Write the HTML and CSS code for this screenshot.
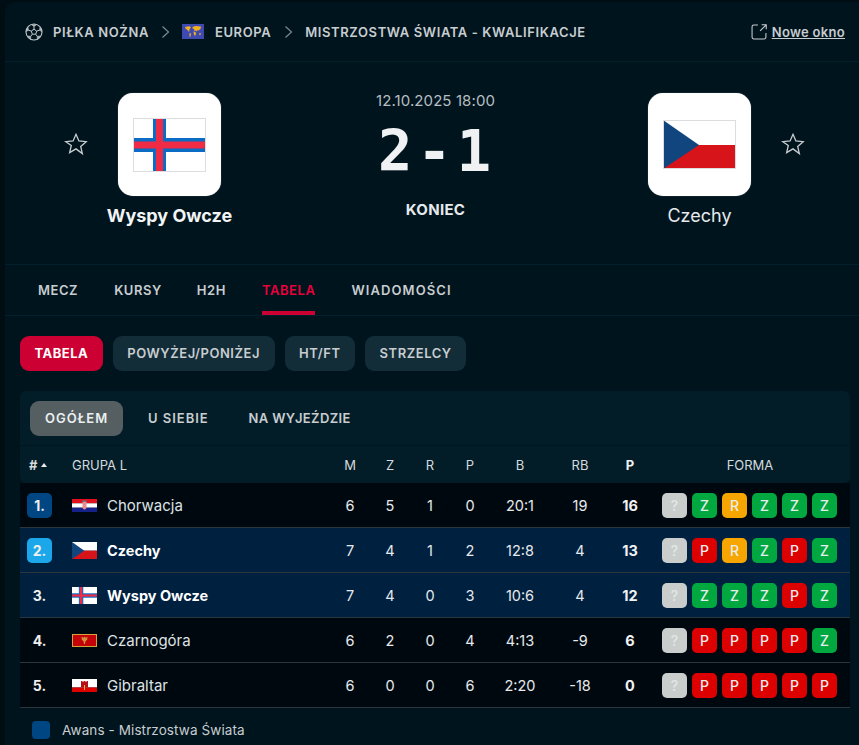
FILE: index.html
```html
<!DOCTYPE html>
<html lang="pl">
<head>
<meta charset="utf-8">
<title>Wyspy Owcze - Czechy</title>
<link rel="stylesheet" href="styles.css">
</head>
<body>
<svg class="defs" width="0" height="0">
  <defs>
    <symbol id="flag-fo" viewBox="0 0 73 54" preserveAspectRatio="none">
      <rect width="73" height="54" fill="#fff"/>
      <rect x="20" width="13" height="54" fill="#0a6cc4"/>
      <rect y="20" width="73" height="14" fill="#0a6cc4"/>
      <rect x="23" width="7" height="54" fill="#ef2b45"/>
      <rect y="23.500" width="73" height="7" fill="#ef2b45"/>
    </symbol>
    <symbol id="flag-cz" viewBox="0 0 73 49" preserveAspectRatio="none">
      <rect width="73" height="25" fill="#fff"/>
      <rect y="25" width="73" height="24" fill="#d7141a"/>
      <path d="M0 0 L36 25 L0 49Z" fill="#11457e"/>
    </symbol>
    <symbol id="flag-hr" viewBox="0 0 25 13" preserveAspectRatio="none">
      <rect width="25" height="4.300" fill="#e2101c"/>
      <rect y="4.300" width="25" height="4.400" fill="#fff"/>
      <rect y="8.700" width="25" height="4.300" fill="#16228a"/>
      <path d="M10.500 3h4v5.500q0 1.500-2 2-2-.5-2-2z" fill="#e58e8e"/>
      <rect x="10.500" y="1.500" width="4" height="1.500" fill="#6a7a98"/>
    </symbol>
    <symbol id="flag-me" viewBox="0 0 25 13" preserveAspectRatio="none">
      <rect width="25" height="13" fill="#d4a33a"/>
      <rect x="1" y="1" width="23" height="11" fill="#c40308"/>
      <path d="M12.500 2.500l1 1.200 2-1-.3 3-1.700 1.600-.5 2.700h-1l-.5-2.700-1.700-1.600-.3-3 2 1z" fill="#d3913a"/>
    </symbol>
    <symbol id="flag-gi" viewBox="0 0 25 13" preserveAspectRatio="none">
      <rect width="25" height="8.500" fill="#fff"/>
      <rect y="8.500" width="25" height="4.500" fill="#df0000"/>
      <path d="M9 2h1.500v1h1V2h2v1h1V2H16v6.500H9z" fill="#b3121b"/>
      <path d="M12 6h1v5h-1z" fill="#e8b23b"/>
    </symbol>
    <symbol id="star" viewBox="0 0 24 24">
      <path d="M12 2.300l2.900 6.700 7.300.7-5.500 4.800 1.650 7.100L12 16.900l-6.350 3.700 1.650-7.100L1.800 9.700 9.100 9z" fill="none" stroke="#c8cdd0" stroke-width="1.300" stroke-linejoin="miter"/>
    </symbol>
    <symbol id="chev" viewBox="0 0 9 14">
      <path d="M1.500 1.500L7.500 7l-6 5.500" fill="none" stroke="#7d878c" stroke-width="1.200"/>
    </symbol>
  </defs>
</svg>

<main class="panel">
  <nav class="crumbs">
    <svg class="ball" viewBox="0 0 18 18" width="18" height="18" aria-hidden="true">
      <circle cx="9" cy="9" r="8" fill="none" stroke="#c3cacd" stroke-width="1.100"/>
      <path d="M9 6.200l2.700 1.900-1 3.100H7.300l-1-3.100z" fill="none" stroke="#c3cacd" stroke-width="1"/>
      <path d="M9 6.200V3.700M11.700 8.100l2.500-.8M10.700 11.200l1.500 2.100M7.300 11.200l-1.500 2.100M6.300 8.100l-2.500-.8" stroke="#c3cacd" stroke-width="1" fill="none"/>
      <path d="M6.500 1.700L9 3.700l2.500-2zM14.200 7.300l1-3.300 1.800 4.500zM12.200 13.300l3.300-.3-3.200 3.200zM5.800 13.300l-3.300-.3 3.200 3.200zM3.800 7.300l-1-3.300L1 8.500z" fill="#aab2b6" stroke="#c3cacd" stroke-width=".5"/>
    </svg>
    <span class="crumb crumb-sport">PIŁKA NOŻNA</span>
    <svg class="chev" width="9" height="14" aria-hidden="true"><use href="#chev"/></svg>
    <svg class="world" viewBox="0 0 22 15" width="22" height="15" aria-hidden="true">
      <rect width="22" height="15" fill="#3f4ab0"/>
      <path d="M3 3l4-.8 2 .8-1.500 2.500L7 8 5.500 6 3.500 4.500zM7.500 9l1.500.5-.5 3-1 .5zM10.500 3l3-1 5.500.5-.5 2.500-2 1.500-1-.5-.5 1.500-1-1-1.500.5-.5-2-1.500-.5zM11.500 7.500l2 .5.500 2-1 2-1-1.500zM17 9.500l1.500-.5.500 1.500-1.500.5z" fill="#f2b11d"/>
    </svg>
    <span class="crumb crumb-region">EUROPA</span>
    <svg class="chev" width="9" height="14" aria-hidden="true"><use href="#chev"/></svg>
    <span class="crumb crumb-comp">MISTRZOSTWA ŚWIATA - KWALIFIKACJE</span>
    <a class="newwin" href="#">
      <svg viewBox="0 0 15 15" width="16" height="16" aria-hidden="true">
        <path d="M6.500 1H2.500Q1 1 1 2.500v10Q1 14 2.500 14h10q1.500 0 1.500-1.500V8.500" fill="none" stroke="#c8cdd0" stroke-width="1"/>
        <path d="M8.500 6.500L14 1M10 .7h4.300v4.300" fill="none" stroke="#c8cdd0" stroke-width="1"/>
      </svg>
      <span class="newwin-text">Nowe okno</span>
    </a>
  </nav>

  <section class="match">
    <svg class="fav" width="24" height="24" aria-hidden="true"><use href="#star"/></svg>
    <div class="team team-home">
      <div class="logo"><svg class="logo-fo" aria-hidden="true"><use href="#flag-fo"/></svg></div>
      <div class="team-name team-name-win">Wyspy Owcze</div>
    </div>
    <div class="result">
      <div class="date">12.10.2025 18:00</div>
      <div class="score">2-1</div>
      <div class="status">KONIEC</div>
    </div>
    <div class="team team-away">
      <div class="logo"><svg class="logo-cz" aria-hidden="true"><use href="#flag-cz"/></svg></div>
      <div class="team-name">Czechy</div>
    </div>
    <svg class="fav fav-away" width="24" height="24" aria-hidden="true"><use href="#star"/></svg>
  </section>

  <nav class="tabs">
    <a class="tab">MECZ</a>
    <a class="tab">KURSY</a>
    <a class="tab tab-h2h">H2H</a>
    <a class="tab tab-active">TABELA</a>
    <a class="tab tab-wide">WIADOMOŚCI</a>
  </nav>

  <div class="content">
    <div class="pills">
      <a class="pill pill-active">TABELA</a>
      <a class="pill">POWYŻEJ/PONIŻEJ</a>
      <a class="pill">HT/FT</a>
      <a class="pill">STRZELCY</a>
    </div>

    <section class="card">
      <div class="subtabs">
        <a class="subtab subtab-active">OGÓŁEM</a>
        <a class="subtab">U SIEBIE</a>
        <a class="subtab subtab-tight">NA WYJEŹDZIE</a>
      </div>
      <div class="row head">
        <div class="rank-h"># <i class="tri"></i></div>
        <div class="group">GRUPA L</div>
        <div class="c">M</div><div class="c">Z</div><div class="c">R</div><div class="c">P</div>
        <div class="c">B</div><div class="c">RB</div><div class="c strong">P</div>
        <div class="forma-h">FORMA</div>
      </div>
    </section>

    <div class="row body">
      <div class="rank"><span class="rank-num q1">1.</span></div>
      <div class="name"><svg class="mini" aria-hidden="true"><use href="#flag-hr"/></svg>Chorwacja</div>
      <div class="c">6</div><div class="c">5</div><div class="c">1</div><div class="c">0</div>
      <div class="c">20:1</div><div class="c">19</div><div class="c strong">16</div>
      <div class="form"><span class="b q">?</span><span class="b w">Z</span><span class="b d">R</span><span class="b w">Z</span><span class="b w">Z</span><span class="b w">Z</span></div>
    </div>
    <div class="row body hl">
      <div class="rank"><span class="rank-num q2">2.</span></div>
      <div class="name name-b"><svg class="mini mini-tall" aria-hidden="true"><use href="#flag-cz"/></svg>Czechy</div>
      <div class="c">7</div><div class="c">4</div><div class="c">1</div><div class="c">2</div>
      <div class="c">12:8</div><div class="c">4</div><div class="c strong">13</div>
      <div class="form"><span class="b q">?</span><span class="b l">P</span><span class="b d">R</span><span class="b w">Z</span><span class="b l">P</span><span class="b w">Z</span></div>
    </div>
    <div class="row body hl">
      <div class="rank"><span class="rank-num">3.</span></div>
      <div class="name name-b"><svg class="mini mini-tall" aria-hidden="true"><use href="#flag-fo"/></svg>Wyspy Owcze</div>
      <div class="c">7</div><div class="c">4</div><div class="c">0</div><div class="c">3</div>
      <div class="c">10:6</div><div class="c">4</div><div class="c strong">12</div>
      <div class="form"><span class="b q">?</span><span class="b w">Z</span><span class="b w">Z</span><span class="b w">Z</span><span class="b l">P</span><span class="b w">Z</span></div>
    </div>
    <div class="row body">
      <div class="rank"><span class="rank-num">4.</span></div>
      <div class="name"><svg class="mini" aria-hidden="true"><use href="#flag-me"/></svg>Czarnogóra</div>
      <div class="c">6</div><div class="c">2</div><div class="c">0</div><div class="c">4</div>
      <div class="c">4:13</div><div class="c">-9</div><div class="c strong">6</div>
      <div class="form"><span class="b q">?</span><span class="b l">P</span><span class="b l">P</span><span class="b l">P</span><span class="b l">P</span><span class="b w">Z</span></div>
    </div>
    <div class="row body">
      <div class="rank"><span class="rank-num">5.</span></div>
      <div class="name"><svg class="mini" aria-hidden="true"><use href="#flag-gi"/></svg>Gibraltar</div>
      <div class="c">6</div><div class="c">0</div><div class="c">0</div><div class="c">6</div>
      <div class="c">2:20</div><div class="c">-18</div><div class="c strong">0</div>
      <div class="form"><span class="b q">?</span><span class="b l">P</span><span class="b l">P</span><span class="b l">P</span><span class="b l">P</span><span class="b l">P</span></div>
    </div>

    <div class="legend"><span class="legend-box"></span>Awans - Mistrzostwa Świata</div>
  </div>
</main>
</body>
</html>
```

FILE: styles.css
```css
* { box-sizing: border-box; }
html, body { margin: 0; height: 100%; }
body {
  background: #000d13;
  font-family: Inter, "Noto Sans", "Liberation Sans", sans-serif;
  color: #e6eaec;
  padding: 2px 0 0 5px;
  overflow: hidden;
}
.defs { position: absolute; }
.panel {
  background: #00141e;
  border-radius: 10px 0 0 0;
  height: 743px;
  overflow: hidden;
}
.crumbs {
  height: 60px;
  border-bottom: 1px solid #02202b;
  display: flex;
  align-items: center;
  padding: 0 14px 0 20px;
  font-size: 13px;
  font-weight: 600;
  letter-spacing: .6px;
  color: #c8cdd0;
}
.ball { margin-right: 10px; }
.crumb-sport { margin-right: 12px; }
.chev { margin-right: 12px; }
.world { margin-right: 11px; }
.crumb-region { margin-right: 13px; }
.newwin {
  margin-left: auto;
  display: flex;
  align-items: center;
  gap: 5px;
  color: #c8cdd0;
  letter-spacing: .3px;
}
.newwin-text { text-decoration: underline; }

.match {
  height: 203px;
  border-bottom: 1px solid #02202b;
  display: flex;
  align-items: flex-start;
  padding-left: 59px;
}
.fav { margin-top: 70px; flex: none; }
.fav-away { margin-left: 2px; }
.team {
  flex: none;
  display: flex;
  flex-direction: column;
  align-items: center;
  padding-top: 31px;
}
.team-home { width: 163px; }
.team-away { width: 159px; }
.logo {
  width: 103px;
  height: 103px;
  background: #fff;
  border-radius: 15px;
  box-shadow: 0 0 1px #8a9599;
  display: flex;
  align-items: center;
  justify-content: center;
}
.logo-fo { width: 73px; height: 54px; outline: 1px solid #ddd; outline-offset: -1px; }
.logo-cz { width: 73px; height: 49px; outline: 1px solid #ddd; outline-offset: -1px; }
.team-name {
  margin-top: 9px;
  font-size: 18px;
  line-height: 22px;
  color: #e6eaec;
}
.team-name-win { font-weight: 700; color: #f2f4f5; }
.result {
  flex: none;
  width: 369px;
  display: flex;
  flex-direction: column;
  align-items: center;
  padding-top: 29px;
}
.date { font-size: 15px; line-height: 20px; letter-spacing: .1px; color: #b7bec2; }
.score {
  font-family: "DejaVu Sans Mono", monospace;
  font-weight: 700;
  font-size: 57px;
  line-height: 60px;
  letter-spacing: 5px;
  margin: 10px 0 0 3px;
  color: #f0f1f2;
}
.status {
  margin-top: 19px;
  font-size: 15px;
  line-height: 20px;
  font-weight: 700;
  letter-spacing: .3px;
  color: #e6eaec;
}

.tabs {
  height: 51px;
  border-bottom: 1px solid #02202b;
  display: flex;
  gap: 36px;
  padding-left: 33px;
}
.tab {
  font-size: 13px;
  font-weight: 600;
  letter-spacing: .55px;
  line-height: 50px;
  color: #c8cdd0;
}
.tab-h2h { margin-left: -1px; }
.tab-active {
  color: #e8003c;
  border-bottom: 4px solid #cc0033;
  height: 50px;
}
.tab-wide { letter-spacing: 1.1px; }

.content { padding: 20px 9px 0 15px; }
.pills { display: flex; gap: 10px; }
.pill {
  height: 35px;
  border-radius: 9px;
  padding: 0 14.500px;
  background: #122c38;
  font-size: 13px;
  font-weight: 600;
  letter-spacing: .55px;
  line-height: 35px;
  color: #c8cdd0;
}
.pill-active { background: #cc0033; color: #fff; font-weight: 700; letter-spacing: .5px; }

.card {
  margin-top: 20px;
  background: #021d28;
  border-radius: 6px;
}
.subtabs {
  height: 55px;
  border-bottom: 1px solid #001620;
  display: flex;
  gap: 10px;
  padding: 10px;
}
.subtab {
  height: 35px;
  border-radius: 9px;
  padding: 0 15px;
  font-size: 13px;
  font-weight: 600;
  letter-spacing: .95px;
  line-height: 35px;
  color: #c8cdd0;
}
.subtab-tight { letter-spacing: .35px; }
.subtab-active { background: #555f62; color: #eceff0; }

.row {
  display: grid;
  grid-template-columns: 52px 258px repeat(4, 40px) 60px 60px 40px 1fr;
  align-items: center;
}
.head {
  height: 37px;
  font-size: 13px;
  color: #d5dadc;
}
.rank-h { padding-left: 9px; font-weight: 700; display: flex; align-items: center; gap: 4px; }
.tri {
  width: 0; height: 0;
  border-left: 3px solid transparent;
  border-right: 3px solid transparent;
  border-bottom: 4px solid #e6eaec;
}
.c { text-align: center; }
.strong { font-weight: 700; color: #f0f2f3; }
.forma-h { text-align: center; }

.body {
  height: 45px;
  background: #00080f;
  border-bottom: 1px solid #2a363d;
  font-size: 14.500px;
  color: #e6eaec;
}
.hl { background: #002040; }
.rank { padding-left: 7px; }
.rank-num {
  display: block;
  width: 25px;
  height: 25px;
  border-radius: 5px;
  text-align: center;
  line-height: 25px;
  font-weight: 700;
  font-size: 14px;
  color: #eef0f1;
}
.q1 { background: #004682; }
.q2 { background: #1ba7ea; }
.name { display: flex; align-items: center; gap: 10px; font-size: 15px; color: #dfe3e5; }
.name-b { font-weight: 700; font-size: 14.500px; color: #fff; }
.mini { width: 25px; height: 13px; flex: none; }
.mini-tall { height: 17px; }
.form { display: flex; gap: 5px; padding-left: 12px; }
.b {
  width: 25px;
  height: 25px;
  border-radius: 5px;
  text-align: center;
  line-height: 25px;
  font-size: 14px;
  font-weight: 500;
  color: #e9ecee;
}
.w { background: #00a83f; }
.l { background: #dc0000; }
.d { background: #f7a600; }
.q { background: #c9cecd; color: #e4e7e6; }

.legend {
  display: flex;
  align-items: center;
  gap: 12px;
  margin-top: 13px;
  padding-left: 12px;
  font-size: 13.500px;
  letter-spacing: .1px;
  color: #c8cdd0;
}
.legend-box {
  width: 18px;
  height: 18px;
  border-radius: 4px;
  background: #004682;
}
```
